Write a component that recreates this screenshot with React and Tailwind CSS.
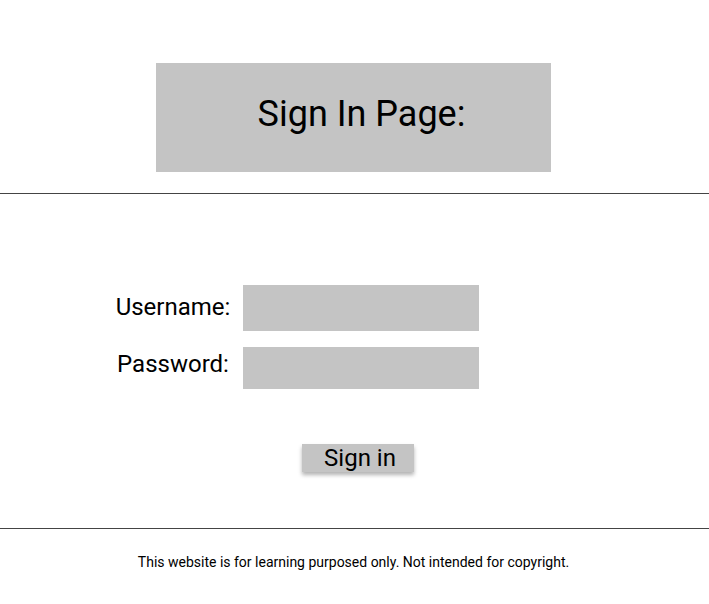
export default function App() {
  return (
    <div className="min-h-[604px] bg-white text-black" style={{ fontFamily: "Roboto, 'Liberation Sans', sans-serif" }}>
      <header className="flex justify-center pt-[63px] pb-[21px]">
        <div className="w-[395px] h-[109px] bg-[#c4c4c4] flex items-center justify-center ml-[-2px]">
          <h1 className="text-[36px] leading-none pb-[8px] pl-[16px]">Sign In Page:</h1>
        </div>
      </header>
      <hr className="border-t border-[#444]" />

      <form className="pt-[91px]" onSubmit={(e) => e.preventDefault()}>
        <div className="grid grid-cols-[130px_236px] gap-y-[15px] gap-x-[5px] ml-[108px] items-center">
          <label className="text-[24px] text-center pb-[3px]">Username:</label>
          <input className="h-[46px] bg-[#c4c4c4] outline-none" />
          <label className="text-[24px] text-center pl-[1px] pr-[1px] pb-[7px]">Password:</label>
          <input type="password" className="h-[42px] bg-[#c4c4c4] outline-none" />
        </div>
        <div className="flex justify-center mt-[55px] pl-[6px]">
          <button
            type="submit"
            className="w-[112px] h-[28px] bg-[#c4c4c4] text-[24px] leading-none pl-[5px] shadow-[0_3px_4px_rgba(0,0,0,0.3)]"
          >
            Sign in
          </button>
        </div>
      </form>

      <hr className="border-t border-[#444] mt-[56px]" />
      <footer className="text-center text-[14px] pt-[23px] pr-[2px]">
        This website is for learning purposed only. Not intended for copyright.
      </footer>
    </div>
  );
}
